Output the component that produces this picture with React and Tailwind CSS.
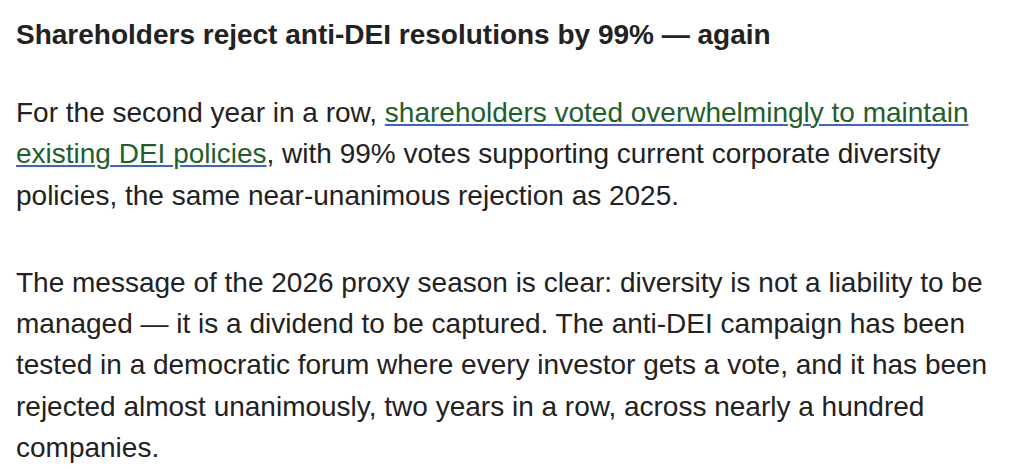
import React from "react";

const App = () => {
  return (
    <div className="bg-white w-[1024px] h-[474px] overflow-hidden text-[#222222] font-['Liberation_Sans',Arial,sans-serif]">
      <div className="px-4 pt-[18px]">
        <h2 className="text-[28px] font-bold leading-[34px]">
          Shareholders reject anti-DEI resolutions by 99% — again
        </h2>
        <p className="mt-[40px] text-[28px] leading-[41.3px]">
          For the second year in a row,{" "}
          <a
            href="#"
            className="text-[#1f5f2b] underline decoration-[#3f63c6] decoration-[2px] underline-offset-[2px]"
          >
            shareholders voted overwhelmingly to maintain existing DEI policies
          </a>
          , with 99% votes supporting current corporate diversity policies, the
          same near-unanimous rejection as 2025.
        </p>
        <p className="mt-[46px] text-[28px] leading-[41.3px]">
          The message of the 2026 proxy season is clear: diversity is not a
          liability to be managed — it is a dividend to be captured. The
          anti-DEI campaign has been tested in a democratic forum where every
          investor gets a vote, and it has been rejected almost unanimously, two
          years in a row, across nearly a hundred companies.
        </p>
      </div>
    </div>
  );
};

export default App;
